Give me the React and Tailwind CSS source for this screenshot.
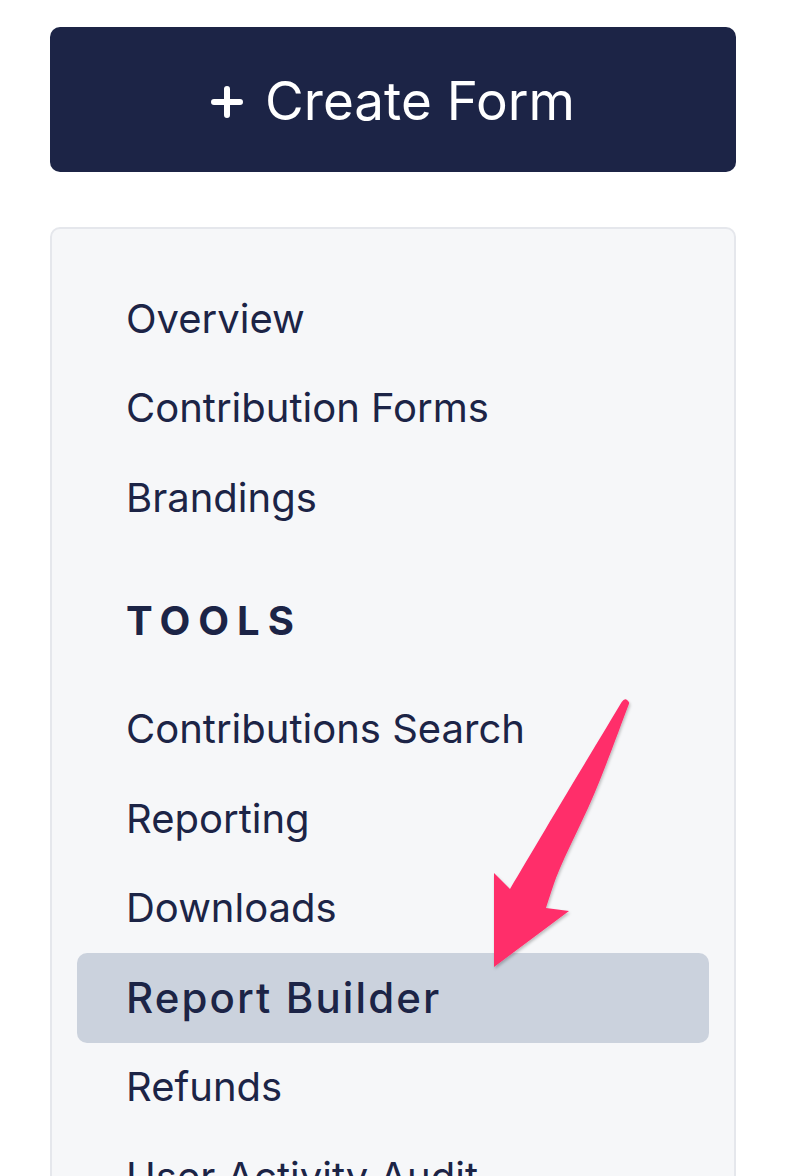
import React from 'react';

const mainItems = ['Overview', 'Contribution Forms', 'Brandings'];
const toolItems = ['Contributions Search', 'Reporting', 'Downloads', 'Report Builder', 'Refunds', 'User Activity Audit'];

const NavItem = ({ label, active }) => (
  <div
    className={`h-[89.5px] flex items-center pl-[49px] rounded-[10px] ${
      active ? 'bg-[#cbd2dd] font-medium text-[42px] tracking-[0.05em]' : 'text-[40px]'
    }`}
  >
    {label}
  </div>
);

// pink annotation arrow drawn over the menu
const PinkArrow = () => (
  <svg className="absolute left-0 top-0 pointer-events-none" width="792" height="1176" viewBox="0 0 792 1176">
    <defs>
      <filter id="arrowShadow" x="-20%" y="-20%" width="140%" height="140%">
        <feDropShadow dx="1" dy="2" stdDeviation="1.5" floodColor="#000" floodOpacity="0.25" />
      </filter>
    </defs>
    <path
      d="M621.7 702 Q625.7 696 629.3 703 C622 722 612 750 600 780 C585 818 566 852 556 878 C551 892 548 902 546 908 L569 911 L494 967 L494 873 L510 889 C520 872 530 855 545 830 C565 796 590 755 621.7 702 Z"
      fill="#ff2d6b"
      filter="url(#arrowShadow)"
    />
  </svg>
);

export default function App() {
  return (
    <div className="relative min-h-screen bg-white text-[#1c2446] overflow-hidden" style={{ fontFamily: 'Inter, "Noto Sans", sans-serif' }}>
      <div className="w-[686px] ml-[50px] pt-[27px]">
        <button className="w-full h-[145px] rounded-[10px] bg-[#1c2446] text-white flex items-center justify-center gap-[22px] pt-[4px]">
          <svg width="32" height="32" viewBox="0 0 32 32">
            <path d="M16 3v26M3 16h26" stroke="#fff" strokeWidth="6" strokeLinecap="round" />
          </svg>
          <span className="text-[53px] leading-none">Create Form</span>
        </button>

        <nav className="mt-[55px] border-2 border-[#e5e7ec] bg-[#f6f7f9] rounded-[10px] px-[25px] pt-[45px] pb-[40px]">
          {mainItems.map((item) => (
            <NavItem key={item} label={item} />
          ))}
          <div className="pl-[49px] pt-[55px] pb-[41px] text-[40px] leading-[46px] font-bold tracking-[0.2em]">
            TOOLS
          </div>
          {toolItems.map((item) => (
            <NavItem key={item} label={item} active={item === 'Report Builder'} />
          ))}
        </nav>
      </div>
      <PinkArrow />
    </div>
  );
}
